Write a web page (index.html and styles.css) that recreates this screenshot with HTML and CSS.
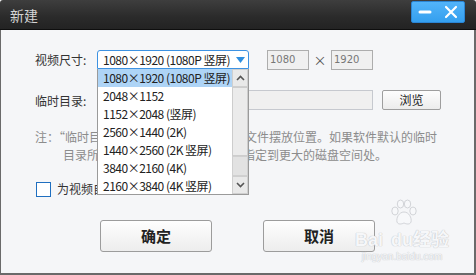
FILE: index.html
```html
<!DOCTYPE html>
<html lang="zh-CN">
<head>
<meta charset="utf-8">
<title>新建</title>
<link rel="stylesheet" href="styles.css">
</head>
<body>
<div class="window">
  <div class="titlebar">
    <span class="title">新建</span>
    <div class="title-btns">
      <svg class="tb-icon" width="14" height="14" viewBox="0 0 14 14"><rect x="0.5" y="5.5" width="13" height="3" rx="1.5" fill="#fff"/></svg>
      <svg class="tb-icon" width="14" height="14" viewBox="0 0 14 14"><path d="M2 2 L12 12 M12 2 L2 12" stroke="#fff" stroke-width="2.2" stroke-linecap="round"/></svg>
    </div>
  </div>
  <div class="content">
    <div class="row row-size">
      <span class="label">视频尺寸:</span>
      <div class="select-wrap">
        <div class="select">
          <span class="select-text">1080×1920 (1080P 竖屏)</span>
          <svg class="select-arrow" width="9" height="6" viewBox="0 0 9 6"><path d="M0 0 H9 L4.5 6 Z" fill="#2f8fe0"/></svg>
        </div>
        <div class="dropdown">
          <ul class="options">
            <li class="opt selected">1080×1920 (1080P 竖屏)</li>
            <li class="opt">2048×1152</li>
            <li class="opt">1152×2048 (竖屏)</li>
            <li class="opt">2560×1440 (2K)</li>
            <li class="opt">1440×2560 (2K 竖屏)</li>
            <li class="opt">3840×2160 (4K)</li>
            <li class="opt">2160×3840 (4K 竖屏)</li>
          </ul>
          <div class="scrollbar">
            <div class="sb-btn"><svg width="9" height="6" viewBox="0 0 9 6"><path d="M1 5 L4.5 1.5 L8 5" stroke="#555" stroke-width="1.6" fill="none"/></svg></div>
            <div class="sb-thumb"></div>
            <div class="sb-track"></div>
            <div class="sb-btn"><svg width="9" height="6" viewBox="0 0 9 6"><path d="M1 1 L4.5 4.5 L8 1" stroke="#555" stroke-width="1.6" fill="none"/></svg></div>
          </div>
        </div>
      </div>
      <div class="num-input">1080</div>
      <span class="times">×</span>
      <div class="num-input">1920</div>
    </div>
    <div class="row row-dir">
      <span class="label">临时目录:</span>
      <div class="path-input"></div>
      <button class="browse">浏览</button>
    </div>
    <div class="note">
      <div class="note-line">注：“临时目录”为视频编辑产生的临时文件摆放位置。如果软件默认的临时</div>
      <div class="note-line indent">目录所在磁盘空间不足，可以将其指定到更大的磁盘空间处。</div>
    </div>
    <div class="row row-check">
      <span class="checkbox"></span>
      <span class="check-label">为视频自动创建</span>
    </div>
    <div class="row row-actions">
      <button class="action">确定</button>
      <button class="action">取消</button>
    </div>
  </div>
  <div class="watermark">
    <svg class="wm-paw" width="30" height="28" viewBox="0 0 30 28">
      <g fill="#f7f8fa" stroke="#d2d4d8" stroke-width="1">
        <ellipse cx="6" cy="12" rx="3.2" ry="4"/>
        <ellipse cx="11.5" cy="5" rx="3.2" ry="4"/>
        <ellipse cx="18.5" cy="5" rx="3.2" ry="4"/>
        <ellipse cx="24" cy="12" rx="3.2" ry="4"/>
        <path d="M15 13 C10 13 7 19 8 23 C9 26 13 25 15 24 C17 25 21 26 22 23 C23 19 20 13 15 13 Z"/>
      </g>
    </svg>
    <span class="wm-main">Bai<span class="wm-gap"></span>du经验</span>
    <span class="wm-sub">jingyan.baidu.com</span>
  </div>
</div>
</body>
</html>
```
FILE: styles.css
```css
* { box-sizing: border-box; }
html, body { margin: 0; padding: 0; }
body {
  width: 476px;
  height: 275px;
  overflow: hidden;
  background: #ffffff;
  font-family: "Noto Sans CJK SC", "Liberation Sans", sans-serif;
}
.window {
  position: relative;
  width: 476px;
  height: 275px;
  display: flex;
  flex-direction: column;
  border-radius: 3px 3px 0 0;
  overflow: hidden;
}
.titlebar {
  height: 30px;
  flex: none;
  background: linear-gradient(#3e3e3e, #2a2a2a 60%, #232323);
  border-bottom: 1px solid #0e0e0e;
  display: flex;
  align-items: flex-start;
  justify-content: space-between;
  padding: 0 11px 0 10px;
}
.title {
  color: #d4d4d4;
  font-size: 14px;
  line-height: 30px;
}
.title-btns {
  margin-top: 1px;
  width: 54px;
  height: 22px;
  border-radius: 2px;
  background: linear-gradient(#52b4fa, #349fee);
  border: 1px solid #2b85d4;
  display: flex;
  align-items: center;
  justify-content: space-between;
  padding: 0 6px 0 6px;
}
.content {
  flex: 1;
  background: #f5f6f8;
  border-left: 1px solid #6a6a6a;
  border-right: 2px solid #6a6a6a;
  border-bottom: 2px solid #6a6a6a;
  padding: 20px 0 0 34px;
  font-size: 12px;
}
.row { display: flex; align-items: center; }
.label {
  width: 62px;
  color: #333;
  font-size: 12px;
  line-height: 19px;
}
.row-size { height: 19px; }
.select-wrap { position: relative; width: 152px; height: 19px; }
.select {
  height: 19px;
  border: 1px solid #3d92e2;
  border-radius: 3px 3px 0 0;
  background: #fff;
  display: flex;
  align-items: center;
  padding: 0 3px 0 5px;
  justify-content: space-between;
}
.select-text, .opt {
  color: #222;
  font-size: 12px;
  white-space: nowrap;
  letter-spacing: -0.5px;
}
.select-text { line-height: 17px; overflow: hidden; }
.dropdown {
  position: absolute;
  top: 19px;
  left: 0;
  width: 152px;
  height: 126px;
  background: #fff;
  border: 1px solid #9a9a9a;
  border-top: none;
  display: flex;
  z-index: 5;
}
.options {
  list-style: none;
  margin: 0;
  padding: 0;
  flex: 1;
  overflow: hidden;
}
.opt {
  height: 18px;
  line-height: 18px;
  padding-left: 5px;
  overflow: hidden;
}
.opt.selected { background: #aed4f6; }
.scrollbar {
  width: 16px;
  flex: none;
  display: flex;
  flex-direction: column;
  background: #e6e6e6;
}
.sb-btn {
  height: 18px;
  background: #e9e9e9;
  border: 1px solid #cfcfcf;
  display: flex;
  align-items: center;
  justify-content: center;
}
.sb-thumb {
  height: 69px;
  background: #ebebeb;
  border: 1px solid #cdcdcd;
}
.sb-track {
  flex: 1;
  background: #e2e2e2;
  border: 1px solid #d0d0d0;
}
.num-input {
  width: 42px;
  height: 20px;
  margin-left: 18px;
  background: #f0f0f0;
  border: 1px solid #adadad;
  color: #777;
  font-family: "DejaVu Sans", sans-serif;
  font-size: 10px;
  line-height: 18px;
  padding-left: 2px;
}
.times {
  width: 22px;
  text-align: center;
  color: #555;
  font-size: 13px;
  line-height: 20px;
}
.times + .num-input { margin-left: 0; }
.row-dir { margin-top: 21px; height: 20px; }
.path-input {
  width: 276px;
  height: 20px;
  background: #f0f0f0;
  border: 1px solid #c6c9cf;
}
.browse {
  margin-left: 9px;
  width: 59px;
  height: 20px;
  padding: 0;
  border: 1px solid #9e9e9e;
  border-radius: 2px;
  background: linear-gradient(#fdfdfd, #ececec);
  font-family: inherit;
  font-size: 12px;
  line-height: 18px;
  color: #222;
}
.note {
  margin-top: 18px;
  color: #8c8c8c;
  font-size: 12px;
  line-height: 18px;
  white-space: nowrap;
}
.note-line.indent { padding-left: 28px; }
.row-check { margin-top: 18px; height: 15px; align-items: flex-start; }
.checkbox {
  width: 15px;
  height: 15px;
  margin-left: 1px;
  background: #fff;
  border: 1px solid #1f6fc0;
}
.check-label {
  margin-left: 6px;
  color: #333;
  font-size: 12px;
  line-height: 12px;
  margin-top: 1px;
}
.row-actions { margin-top: 23px; padding-left: 65px; gap: 51px; }
.action {
  width: 112px;
  height: 32px;
  padding: 0;
  border: 1px solid #9c9c9c;
  border-radius: 3px;
  background: linear-gradient(#fefefe, #ededed);
  font-family: inherit;
  font-size: 15px;
  font-weight: bold;
  color: #222;
  line-height: 30px;
}
.watermark {
  position: absolute;
  left: 356px;
  top: 199px;
  width: 92px;
  display: flex;
  flex-direction: column;
  align-items: center;
  color: #f6f7f9;
  text-shadow: 0 0 1px #c4c6ca, 0 0 1px #c4c6ca;
  pointer-events: none;
}
.wm-paw { display: block; margin-left: 4px; }
.wm-main {
  font-family: "Liberation Sans", "Noto Sans CJK SC", sans-serif;
  font-size: 18px;
  font-weight: bold;
  line-height: 22px;
  margin-top: 2px;
  white-space: nowrap;
}
.wm-gap { display: inline-block; width: 8px; }
.wm-sub { font-family: "Liberation Sans", sans-serif; font-size: 10px; line-height: 12px; }
```
